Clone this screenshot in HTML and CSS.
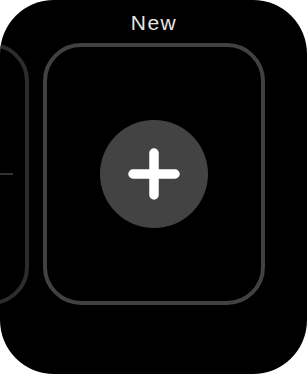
FILE: index.html
```html
<!DOCTYPE html>
<html>
<head>
<meta charset="utf-8">
<link rel="stylesheet" href="styles.css">
</head>
<body>
<div class="screen">
  <div class="title">New</div>
  <div class="cards">
    <div class="card card-prev">
      <div class="prev-line"></div>
    </div>
    <div class="card card-new">
      <div class="add-btn">
        <svg width="52" height="52" viewBox="0 0 52 52">
          <path d="M26 5 V47 M5 26 H47" stroke="#ffffff" stroke-width="9.5" stroke-linecap="round" fill="none"/>
        </svg>
      </div>
    </div>
  </div>
</div>
</body>
</html>
```

FILE: styles.css
```css
html, body {
  margin: 0;
  padding: 0;
  background: #ffffff;
}
.screen {
  width: 307px;
  height: 374px;
  background: #000000;
  border-radius: 54px;
  overflow: hidden;
  display: flex;
  flex-direction: column;
}
.title {
  padding-top: 10px;
  height: 25px;
  line-height: 25px;
  text-align: center;
  color: #e6e6e6;
  font-family: "Liberation Sans", Arial, sans-serif;
  font-size: 21px;
  letter-spacing: 1.5px;
  padding-left: 1px;
}
.cards {
  margin-top: 8px;
  display: flex;
  gap: 14px;
  margin-left: -193px;
}
.card {
  flex: none;
  width: 222px;
  height: 262px;
  box-sizing: border-box;
  border: 4px solid #414141;
  border-radius: 38px;
  display: flex;
  align-items: center;
  justify-content: center;
}
.card-prev {
  border-color: #2c2c2c;
  justify-content: flex-end;
}
.prev-line {
  width: 14px;
  height: 2px;
  background: #333333;
  margin-right: 12px;
}
.add-btn {
  width: 108px;
  height: 108px;
  border-radius: 50%;
  background: #434343;
  display: flex;
  align-items: center;
  justify-content: center;
}
.add-btn svg {
  display: block;
}
```
